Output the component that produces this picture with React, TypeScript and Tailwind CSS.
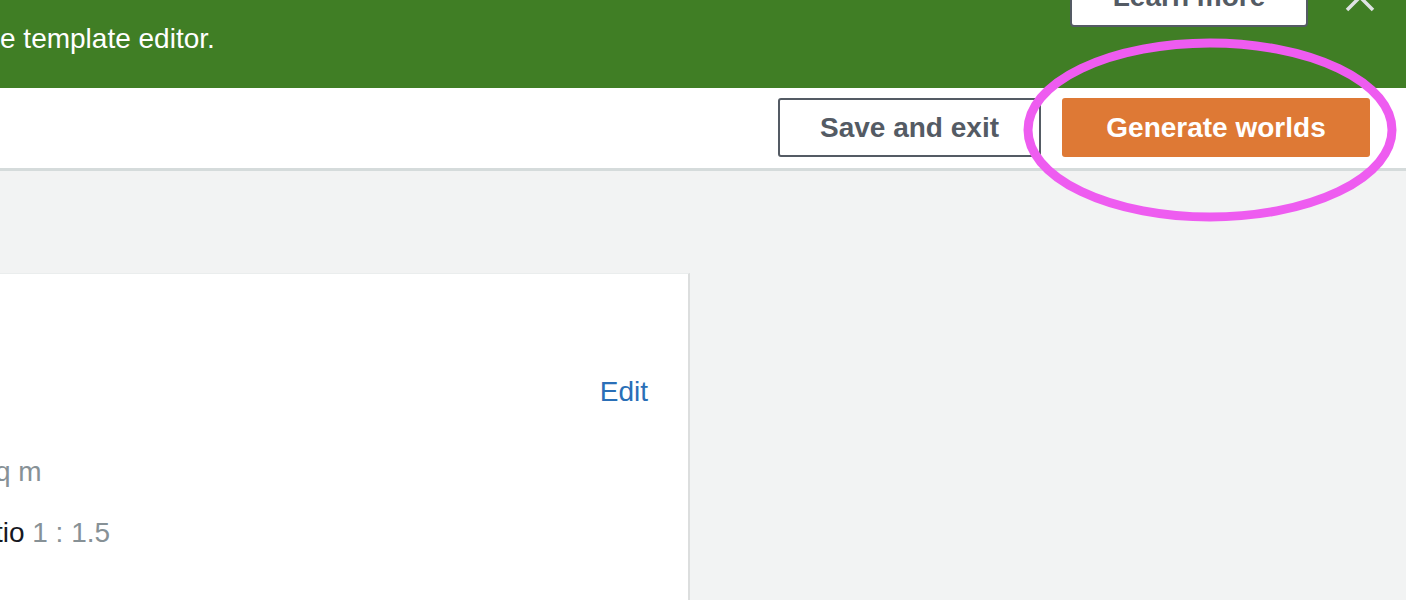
export default function App() {
  return (
    <div className="min-h-[600px] h-[600px] overflow-hidden bg-[#f2f3f3] font-['Liberation_Sans',Arial,sans-serif]">
      {/* success flash */}
      <div className="flex h-[88px] overflow-hidden bg-[#407e25]">
        <p className="flex-1 pt-[19px] text-[28px] leading-[40px] text-white whitespace-nowrap">
          e template editor.
        </p>
        <div className="-mt-[33px] flex items-start">
          <button
            type="button"
            className="h-[60px] w-[238px] rounded-[4px] border-2 border-[#545b64] bg-white text-[28px] font-bold text-[#545b64]"
          >
            Learn more
          </button>
          <svg width="98" height="60" viewBox="0 0 98 60" className="shrink-0">
            <path d="M39 17 L65 43 M65 17 L39 43" stroke="#dfe3e3" strokeWidth="3.5" fill="none" />
          </svg>
        </div>
      </div>

      {/* action bar */}
      <div className="relative flex h-[83px] items-start justify-end gap-[21px] border-b-[3px] border-[#d5dbdb] bg-white pt-[10px] pr-[36px]">
        <button
          type="button"
          className="h-[59px] w-[263px] rounded-[3px] border-2 border-[#545b64] bg-white text-[28px] font-bold text-[#545b64]"
        >
          Save and exit
        </button>
        <button
          type="button"
          className="h-[59px] w-[308px] rounded-[3px] bg-[#de7935] text-[28px] font-bold text-white"
        >
          Generate worlds
        </button>
        {/* annotation ring */}
        <svg
          width="390"
          height="200"
          viewBox="0 0 390 200"
          className="pointer-events-none absolute left-[1015px] top-[-58px]"
        >
          <ellipse cx="195" cy="100" rx="182" ry="87" fill="none" stroke="#ee5cf0" strokeWidth="9" />
        </svg>
      </div>

      {/* content */}
      <div className="pt-[102px]">
        <div className="h-[400px] w-[690px] border-t border-r-2 border-t-[#eaeded] border-r-[#dcdede] bg-white">
          <div className="flex justify-end pt-[98px] pr-[40px]">
            <a className="text-[28px] leading-[40px] text-[#2a6fb7]">Edit</a>
          </div>
          <div className="mt-[40px] whitespace-nowrap text-[28px] leading-[40px] text-[#879196]">
            <span className="-ml-[19px]">sq m</span>
          </div>
          <div className="mt-[21px] whitespace-nowrap text-[28px] leading-[40px]">
            <span className="-ml-[30px] text-[#16191f]">ratio</span>{' '}
            <span className="text-[#879196]">1 : 1.5</span>
          </div>
        </div>
      </div>
    </div>
  );
}
